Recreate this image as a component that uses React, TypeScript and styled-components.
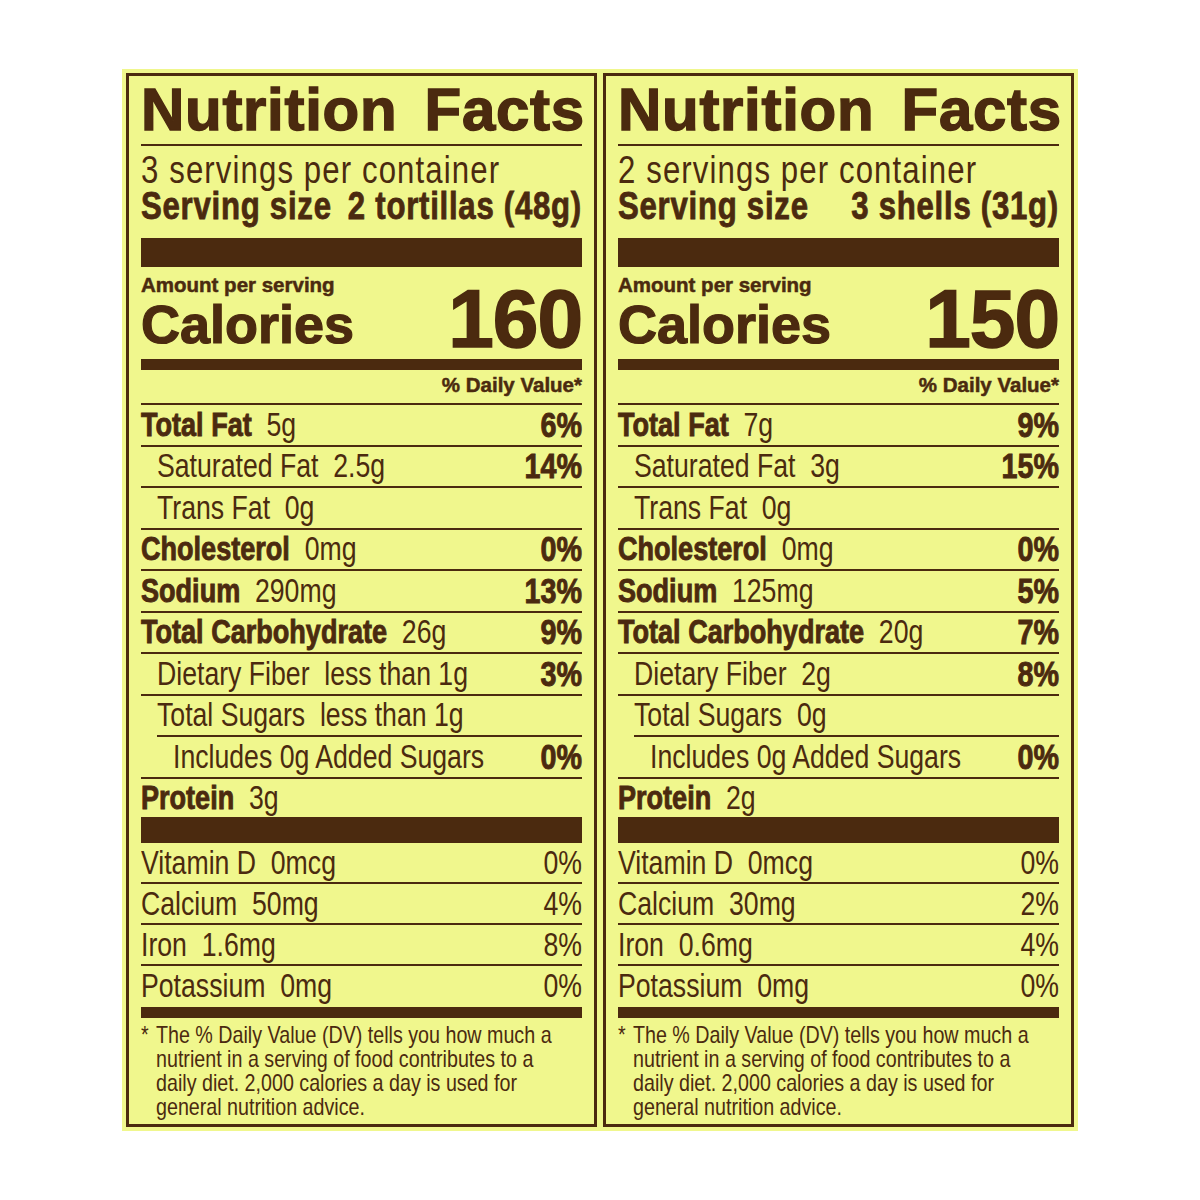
import React from "react";
import styled, { createGlobalStyle, css } from "styled-components";

const BROWN = "#4b2a0f";
const YELLOW = "#f0f78d";
const SCALE = 0.82;

const GlobalStyle = createGlobalStyle`
  html, body { margin: 0; padding: 0; background: #ffffff; }
  * { box-sizing: border-box; }
`;

const FONT = `"Liberation Sans", Arial, sans-serif`;

/* No condensed face is installed, so narrow lines are set wider and squeezed. */
const condensed = css`
  width: calc(100% / ${SCALE});
  transform: scaleX(${SCALE});
  transform-origin: left center;
  flex: none;
`;

const Page = styled.div`
  width: 1200px;
  height: 1200px;
  display: flex;
  align-items: center;
  justify-content: center;
`;

const Sheet = styled.div`
  background: ${YELLOW};
  padding: 4px;
  display: flex;
  gap: 6px;
`;

const Panel = styled.section`
  width: 471px;
  height: 1054px;
  border: 3px solid ${BROWN};
  padding: 0 12px;
  color: ${BROWN};
  font-family: ${FONT};
  display: flex;
  flex-direction: column;
`;

const Title = styled.h1`
  margin: 0;
  height: 68px;
  font-weight: 700;
  font-size: 60px;
  line-height: 68px;
  letter-spacing: 0.7px;
  word-spacing: 10px;
  white-space: nowrap;
  -webkit-text-stroke: 1.4px ${BROWN};
`;

const Rule = styled.div<{ $indent?: number }>`
  height: 2px;
  margin-left: ${(p) => p.$indent ?? 0}px;
  background: ${BROWN};
  flex: none;
`;

const Bar = styled.div<{ $h: number; $mt?: number }>`
  height: ${(p) => p.$h}px;
  margin-top: ${(p) => p.$mt ?? 0}px;
  background: ${BROWN};
  flex: none;
`;

const Servings = styled.div`
  ${condensed};
  margin-top: 6px;
  font-size: 38px;
  line-height: 36px;
  letter-spacing: 1.35px;
  white-space: nowrap;
`;

const ServingSize = styled.div`
  ${condensed};
  display: flex;
  justify-content: space-between;
  font-weight: 700;
  font-size: 38px;
  line-height: 36px;
  letter-spacing: 0.9px;
  white-space: nowrap;
  -webkit-text-stroke: 0.8px ${BROWN};
`;

const Amount = styled.div`
  margin-top: 7px;
  font-weight: 700;
  font-size: 20.5px;
  line-height: 22px;
  white-space: nowrap;
  -webkit-text-stroke: 0.5px ${BROWN};
`;

const CaloriesRow = styled.div`
  height: 63px;
  display: flex;
  justify-content: space-between;
  align-items: flex-end;
  font-weight: 700;
  white-space: nowrap;
`;

const CaloriesLabel = styled.span`
  font-size: 54px;
  line-height: 54px;
  margin-bottom: 8px;
  -webkit-text-stroke: 1.2px ${BROWN};
`;

const CaloriesValue = styled.span`
  font-size: 82px;
  line-height: 82px;
  margin-bottom: -1px;
  letter-spacing: -1px;
  -webkit-text-stroke: 1.5px ${BROWN};
`;

const DVHead = styled.div`
  height: 33px;
  padding-top: 4px;
  text-align: right;
  font-weight: 700;
  font-size: 20.5px;
  line-height: 22px;
  white-space: nowrap;
  -webkit-text-stroke: 0.5px ${BROWN};
`;

const Row = styled.div<{ $indent: number; $h: number }>`
  ${condensed};
  height: ${(p) => p.$h}px;
  padding-left: ${(p) => p.$indent / SCALE}px;
  display: flex;
  align-items: center;
  justify-content: space-between;
  font-size: 32.5px;
  line-height: 32px;
  white-space: nowrap;
`;

const Label = styled.span<{ $bold: boolean }>`
  font-weight: ${(p) => (p.$bold ? 700 : 400)};
  font-size: ${(p) => (p.$bold ? 33 : 32.5)}px;
  -webkit-text-stroke: ${(p) => (p.$bold ? `0.9px ${BROWN}` : "0")};
`;

const Qty = styled.span`
  margin-left: 18px;
`;

const Pct = styled.span<{ $bold: boolean }>`
  font-weight: ${(p) => (p.$bold ? 700 : 400)};
  font-size: ${(p) => (p.$bold ? 35 : 32.5)}px;
  -webkit-text-stroke: ${(p) => (p.$bold ? `0.9px ${BROWN}` : "0")};
`;

const Footnote = styled.div`
  ${condensed};
  padding-top: 5px;
  display: flex;
  font-size: 24px;
  line-height: 24px;
  white-space: nowrap;
`;

const Star = styled.span`
  width: ${15 / SCALE}px;
  flex: none;
`;

const FootLines = styled.div`
  display: flex;
  flex-direction: column;
`;

type Nutrient = {
  label: string;
  qty?: string;
  pct?: string;
  bold?: boolean;
  indent?: number;
  lineIndent?: number;
};

type LabelData = {
  servings: string;
  size: string;
  calories: string;
  nutrients: Nutrient[];
  vitamins: { label: string; qty: string; pct: string }[];
};

const labels: LabelData[] = [
  {
    servings: "3 servings per container",
    size: "2 tortillas (48g)",
    calories: "160",
    nutrients: [
      { label: "Total Fat", qty: "5g", pct: "6%", bold: true },
      { label: "Saturated Fat", qty: "2.5g", pct: "14%", indent: 16 },
      { label: "Trans Fat", qty: "0g", indent: 16 },
      { label: "Cholesterol", qty: "0mg", pct: "0%", bold: true },
      { label: "Sodium", qty: "290mg", pct: "13%", bold: true },
      { label: "Total Carbohydrate", qty: "26g", pct: "9%", bold: true },
      { label: "Dietary Fiber", qty: "less than 1g", pct: "3%", indent: 16 },
      { label: "Total Sugars", qty: "less than 1g", indent: 16, lineIndent: 16 },
      { label: "Includes 0g Added Sugars", pct: "0%", indent: 32 },
      { label: "Protein", qty: "3g", bold: true },
    ],
    vitamins: [
      { label: "Vitamin D", qty: "0mcg", pct: "0%" },
      { label: "Calcium", qty: "50mg", pct: "4%" },
      { label: "Iron", qty: "1.6mg", pct: "8%" },
      { label: "Potassium", qty: "0mg", pct: "0%" },
    ],
  },
  {
    servings: "2 servings per container",
    size: "3 shells (31g)",
    calories: "150",
    nutrients: [
      { label: "Total Fat", qty: "7g", pct: "9%", bold: true },
      { label: "Saturated Fat", qty: "3g", pct: "15%", indent: 16 },
      { label: "Trans Fat", qty: "0g", indent: 16 },
      { label: "Cholesterol", qty: "0mg", pct: "0%", bold: true },
      { label: "Sodium", qty: "125mg", pct: "5%", bold: true },
      { label: "Total Carbohydrate", qty: "20g", pct: "7%", bold: true },
      { label: "Dietary Fiber", qty: "2g", pct: "8%", indent: 16 },
      { label: "Total Sugars", qty: "0g", indent: 16, lineIndent: 16 },
      { label: "Includes 0g Added Sugars", pct: "0%", indent: 32 },
      { label: "Protein", qty: "2g", bold: true },
    ],
    vitamins: [
      { label: "Vitamin D", qty: "0mcg", pct: "0%" },
      { label: "Calcium", qty: "30mg", pct: "2%" },
      { label: "Iron", qty: "0.6mg", pct: "4%" },
      { label: "Potassium", qty: "0mg", pct: "0%" },
    ],
  },
];

const footLines = [
  "The % Daily Value (DV) tells you how much a",
  "nutrient in a serving of food contributes to a",
  "daily diet. 2,000 calories a day is used for",
  "general nutrition advice.",
];

function FactsPanel({ data }: { data: LabelData }) {
  const n = data.nutrients.length;
  return (
    <Panel>
      <Title>Nutrition Facts</Title>
      <Rule />
      <Servings>{data.servings}</Servings>
      <ServingSize>
        <span>Serving size</span>
        <span>{data.size}</span>
      </ServingSize>
      <Bar $h={29} $mt={14} />
      <Amount>Amount per serving</Amount>
      <CaloriesRow>
        <CaloriesLabel>Calories</CaloriesLabel>
        <CaloriesValue>{data.calories}</CaloriesValue>
      </CaloriesRow>
      <Bar $h={11} />
      <DVHead>% Daily Value*</DVHead>
      <Rule />
      {data.nutrients.map((r, i) => (
        <React.Fragment key={r.label}>
          <Row $indent={r.indent ?? 0} $h={i === n - 1 ? 38.5 : 39.5}>
            <span>
              <Label $bold={!!r.bold}>{r.label}</Label>
              {r.qty && <Qty>{r.qty}</Qty>}
            </span>
            {r.pct && <Pct $bold>{r.pct}</Pct>}
          </Row>
          {i < n - 1 && <Rule $indent={r.lineIndent ?? 0} />}
        </React.Fragment>
      ))}
      <Bar $h={26} />
      {data.vitamins.map((v, i) => (
        <React.Fragment key={v.label}>
          <Row $indent={0} $h={39}>
            <span>
              <Label $bold={false}>{v.label}</Label>
              <Qty>{v.qty}</Qty>
            </span>
            <Pct $bold={false}>{v.pct}</Pct>
          </Row>
          {i < data.vitamins.length - 1 && <Rule />}
        </React.Fragment>
      ))}
      <Bar $h={11} $mt={2} />
      <Footnote>
        <Star>*</Star>
        <FootLines>
          {footLines.map((l) => (
            <span key={l}>{l}</span>
          ))}
        </FootLines>
      </Footnote>
    </Panel>
  );
}

export default function App() {
  return (
    <Page>
      <GlobalStyle />
      <Sheet>
        {labels.map((d) => (
          <FactsPanel key={d.calories} data={d} />
        ))}
      </Sheet>
    </Page>
  );
}
